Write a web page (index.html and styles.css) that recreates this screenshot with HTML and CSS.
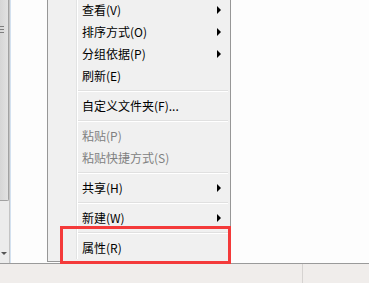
FILE: index.html
```html
<!DOCTYPE html>
<html lang="zh-CN">
<head>
    <meta charset="UTF-8">
    <title>右键菜单</title>
    <link rel="stylesheet" href="styles.css">
</head>
<body>
    <div class="window">
        <div class="main">
            <div class="scrollbar">
                <div class="thumb"><span class="grip"></span></div>
                <div class="down-arrow"></div>
            </div>
            <div class="pane"></div>
        </div>
        <div class="statusbar">
            <div class="status-cell wide"></div>
            <div class="status-cell"></div>
        </div>
    </div>

    <div class="menu">
        <div class="menu-body">
            <div class="item">查看(V)<span class="arrow"></span></div>
            <div class="item">排序方式(O)<span class="arrow"></span></div>
            <div class="item">分组依据(P)<span class="arrow"></span></div>
            <div class="item">刷新(E)</div>
            <div class="sep"></div>
            <div class="item">自定义文件夹(F)...</div>
            <div class="sep"></div>
            <div class="item disabled">粘贴(P)</div>
            <div class="item disabled">粘贴快捷方式(S)</div>
            <div class="sep"></div>
            <div class="item">共享(H)<span class="arrow"></span></div>
            <div class="sep"></div>
            <div class="item">新建(W)<span class="arrow"></span></div>
            <div class="sep"></div>
            <div class="item">属性(R)</div>
        </div>
    </div>

    <div class="highlight"></div>
</body>
</html>
```

FILE: styles.css
```css
body {
    margin: 0;
    width: 369px;
    height: 283px;
    overflow: hidden;
    position: relative;
    background: #fcfcfc;
    font-family: "Noto Sans CJK SC", "Microsoft YaHei", sans-serif;
    font-size: 12px;
}
.window {
    display: flex;
    flex-direction: column;
    height: 283px;
}
.main {
    display: flex;
    height: 263px;
}
.scrollbar {
    width: 9px;
    background: #ececec;
    border-right: 1px solid #c4c4c4;
    display: flex;
    flex-direction: column;
    justify-content: space-between;
}
.thumb {
    height: 200px;
    width: 8px;
    background: linear-gradient(to right, #d6d6d6, #e2e2e2);
    border: 1px solid #a2a2a2;
    border-left: none;
    border-top: none;
    border-radius: 0 0 2px 0;
    position: relative;
}
.grip {
    position: absolute;
    left: 0;
    top: 26px;
    width: 4px;
    height: 7px;
    background: repeating-linear-gradient(#7d7d7d 0, #7d7d7d 1px, transparent 1px, transparent 3px);
}
.down-arrow {
    width: 0;
    height: 0;
    margin: 0 0 8px 1px;
    border-left: 3px solid transparent;
    border-right: 3px solid transparent;
    border-top: 3px solid #555;
}
.pane {
    flex: 1;
    background: #fdfdfd;
    border-left: 1px solid #d3e1f0;
}
.statusbar {
    flex: 1;
    display: flex;
    border-top: 1px solid #9a9a9a;
    background: #f0edeb;
}
.status-cell.wide {
    width: 302px;
    border-right: 1px solid #d6d3d1;
}
.menu {
    position: absolute;
    left: 47px;
    top: -4px;
    width: 182px;
    background: #f0f0f0;
    border: 1px solid #979797;
    padding: 2px;
    box-sizing: content-box;
    width: 178px;
}
.menu-body {
    background: linear-gradient(to right, transparent 26px, #e2e3e3 26px, #e2e3e3 27px, #ffffff 27px, #ffffff 28px, transparent 28px);
}
.item {
    height: 22px;
    line-height: 22px;
    padding-left: 32px;
    padding-right: 7px;
    display: flex;
    align-items: center;
    color: #000;
    white-space: nowrap;
}
.item.disabled {
    color: #808080;
}
.arrow {
    margin-left: auto;
    width: 0;
    height: 0;
    border-top: 4px solid transparent;
    border-bottom: 4px solid transparent;
    border-left: 4px solid #000;
}
.sep {
    height: 8px;
    margin-left: 28px;
    margin-right: 0;
    background: linear-gradient(transparent 3px, #e0e0e0 3px, #e0e0e0 4px, #ffffff 4px, #ffffff 5px, transparent 5px);
}
.highlight {
    position: absolute;
    left: 60px;
    top: 226px;
    width: 165px;
    height: 32px;
    border: 3px solid #f43a3a;
}
```
